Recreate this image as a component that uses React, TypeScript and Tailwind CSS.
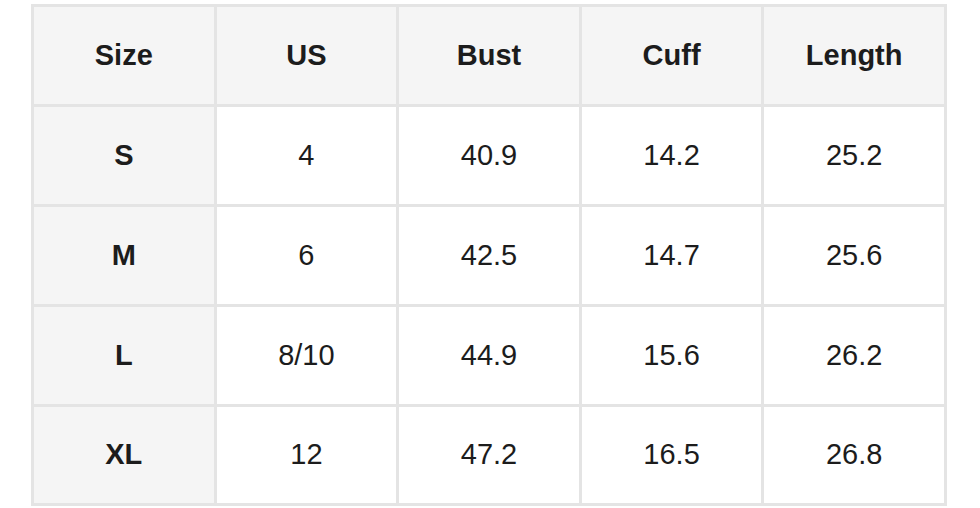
const headers = ["Size", "US", "Bust", "Cuff", "Length"];

const rows = [
  ["S", "4", "40.9", "14.2", "25.2"],
  ["M", "6", "42.5", "14.7", "25.6"],
  ["L", "8/10", "44.9", "15.6", "26.2"],
  ["XL", "12", "47.2", "16.5", "26.8"],
];

export default function App() {
  return (
    <div className="w-[980px] h-[508px] bg-white overflow-hidden pl-[31px] pt-[4px] text-[#1c1c1c] font-['Liberation_Sans',Arial,sans-serif]">
      <div className="grid grid-cols-[repeat(5,179.6px)] grid-rows-[repeat(4,97px)_96px] gap-[3px] p-[3px] bg-[#e4e4e4] w-fit">
        {headers.map((h) => (
          <div key={h} className="bg-[#f5f5f5] flex items-center justify-center text-[29px] font-bold">
            {h}
          </div>
        ))}
        {rows.map((row) =>
          row.map((cell, i) => (
            <div
              key={row[0] + i}
              className={
                i === 0
                  ? "bg-[#f5f5f5] flex items-center justify-center text-[29px] font-bold"
                  : "bg-white flex items-center justify-center text-[29px]"
              }
            >
              {cell}
            </div>
          ))
        )}
      </div>
    </div>
  );
}
